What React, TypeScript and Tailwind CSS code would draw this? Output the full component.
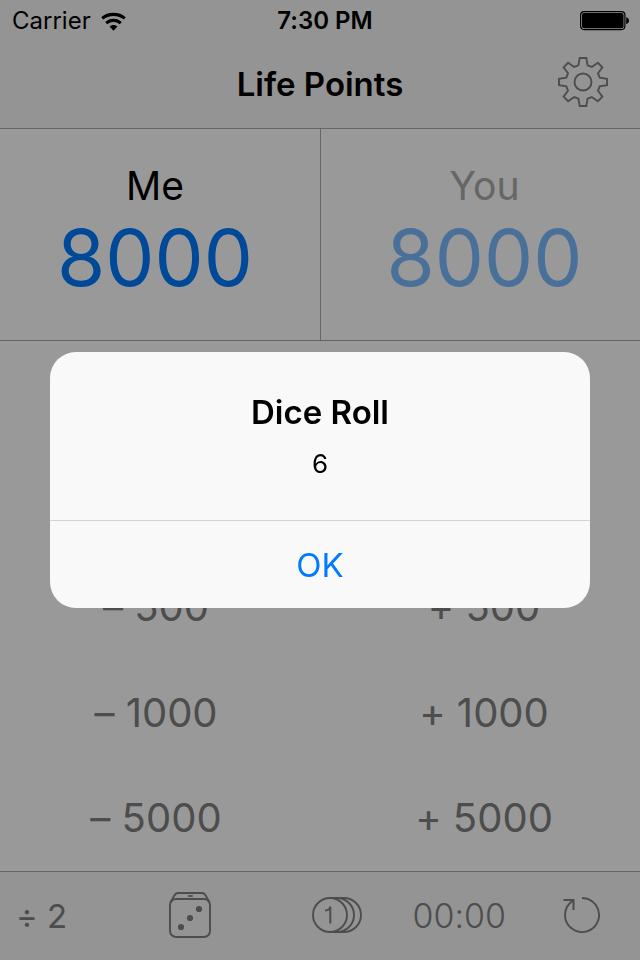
import { useState } from "react";

const steps = [50, 100, 500, 1000, 5000];

function WifiIcon() {
  return (
    <svg width="25" height="19" viewBox="0 0 25 19" fill="none" stroke="black" aria-hidden="true">
      <path d="M1.200 6.400C7.400 1 17.600 1 23.800 6.400" strokeWidth="3.100" />
      <path d="M5.200 11.200C9.400 7.200 15.600 7.200 19.800 11.200" strokeWidth="3" />
      <path d="M12.500 18.800L8.500 14.600C10.800 12.400 14.200 12.400 16.500 14.600Z" fill="black" stroke="none" />
    </svg>
  );
}

function BatteryIcon() {
  return (
    <svg width="50" height="20" viewBox="0 0 50 20" aria-hidden="true">
      <rect x="0.600" y="0.600" width="44.300" height="18" rx="3.500" fill="none" stroke="black" strokeWidth="1.200" />
      <rect x="2" y="2" width="41.500" height="15.200" rx="2" fill="black" />
      <path d="M46.200 6.200C48 6.600 49 7.800 49 9.600S48 12.600 46.200 13Z" fill="black" />
    </svg>
  );
}

function GearIcon() {
  return (
    <svg width="50" height="50" viewBox="0 0 50 50" fill="none" stroke="currentColor" strokeWidth="1.900" aria-hidden="true">
      <circle cx="25" cy="25" r="8.500" />
      <path d="M21.700 1H28.300L29.600 8.300L33.800 10L39.900 5.800L44.400 10.300L40 16.300L41.700 20.600L49 21.800V28.200L41.700 29.400L40 33.700L44.400 39.700L39.900 44.200L33.800 40L29.600 41.700L28.300 49H21.700L20.400 41.700L16.200 40L10.100 44.200L5.600 39.700L10 33.700L8.300 29.400L1 28.200V21.800L8.300 20.600L10 16.300L5.600 10.300L10.100 5.800L16.200 10L20.400 8.300Z" />
    </svg>
  );
}

function DiceIcon() {
  return (
    <svg width="42" height="46" viewBox="0 0 42 46" fill="none" stroke="currentColor" strokeWidth="1.900" aria-hidden="true">
      <rect x="1" y="7" width="40" height="38" rx="6" />
      <path d="M1.400 10.500L5.200 3.800C6.200 1.800 7.400 1 9.400 1H32.600C34.600 1 35.800 1.800 36.800 3.800L40.600 10.500" />
      <ellipse cx="21.500" cy="4" rx="2.800" ry="1" fill="currentColor" stroke="none" />
      <g fill="currentColor" stroke="none">
        <circle cx="12" cy="35" r="3.100" />
        <circle cx="21" cy="26" r="3.100" />
        <circle cx="30" cy="17" r="3.100" />
      </g>
    </svg>
  );
}

function CoinsIcon() {
  return (
    <svg width="50" height="36" viewBox="0 0 50 36" fill="none" stroke="currentColor" strokeWidth="1.900" aria-hidden="true">
      <circle cx="18" cy="18" r="17" />
      <path d="M18 1H25A17 17 0 0 1 25 35H18" />
      <path d="M25 1H32A17 17 0 0 1 32 35H25" />
      <path d="M13 13.500C16 13.500 18 12.500 18.300 9.500V26.500" strokeWidth="2" />
    </svg>
  );
}

function ResetIcon() {
  return (
    <svg width="40" height="36" viewBox="0 0 40 36" fill="none" stroke="currentColor" strokeWidth="1.900" aria-hidden="true">
      <path d="M20 1A17 17 0 1 1 11 3.600" />
      <path d="M1.500 3H11.500V13" strokeWidth="2" />
    </svg>
  );
}

export default function App() {
  const [open, setOpen] = useState(true);

  return (
    <div className="min-h-screen bg-white flex flex-col text-black font-[Inter,'Liberation_Sans',sans-serif] [font-feature-settings:'calt'_0]">
      <header className="bg-[#f7f7f7] border-b border-[#aaaaaa]">
        <div className="h-10 grid grid-cols-3 items-center text-2xl pt-0.5 pl-3 pr-[10px]">
          <div className="flex items-center gap-2.5">
            <span>Carrier</span>
            <WifiIcon />
          </div>
          <span className="pl-2 text-center font-semibold">7:30 PM</span>
          <div className="flex justify-end">
            <BatteryIcon />
          </div>
        </div>
        <div className="h-[88px] grid grid-cols-[1fr_auto_1fr] items-center px-8">
          <h1 className="col-start-2 text-[33px] leading-10 font-semibold">Life Points</h1>
          <button aria-label="Settings" className="justify-self-end pb-1 text-[#808080]">
            <GearIcon />
          </button>
        </div>
      </header>

      <main className="flex-1 flex flex-col">
        <section className="grid grid-cols-2 text-center border-b border-[#aaaaaa]">
          <div className="pt-[33px] pb-[34px] pr-[10px]">
            <h2 className="text-[39px] leading-[48px]">Me</h2>
            <p className="text-[78px] leading-[96px] text-[#007aff]">8000</p>
          </div>
          <div className="pt-[33px] pb-[34px] pl-2 border-l border-[#aaaaaa]">
            <h2 className="text-[39px] leading-[48px] text-[#aaaaaa]">You</h2>
            <p className="text-[78px] leading-[96px] text-[#7bbbff]">8000</p>
          </div>
        </section>

        <section className="flex-1 grid grid-cols-2 gap-x-4 auto-rows-fr pt-[3px] text-[40px] leading-[48px] text-[#808080]">
          {steps.map((step) => (
            <div key={step} className="contents">
              <button>– {step}</button>
              <button>+ {step}</button>
            </div>
          ))}
        </section>
      </main>

      <footer className="h-[89px] bg-[#f7f7f7] border-t border-[#aaaaaa] flex items-center pl-4 pr-[38px] text-[33px] leading-10 text-[#808080]">
        <div className="flex-1 flex items-center justify-between">
          <button>÷ 2</button>
          <button aria-label="Roll dice" className="pb-0.5">
            <DiceIcon />
          </button>
          <button aria-label="Flip coin" className="pb-0.5">
            <CoinsIcon />
          </button>
        </div>
        <button className="ml-[50px] text-[34px] font-light">00:00</button>
        <button aria-label="Reset" className="ml-14 pb-0.5">
          <ResetIcon />
        </button>
      </footer>

      {open && (
        <div className="fixed inset-0 bg-black/40 flex items-center justify-center px-[50px]">
          <div
            role="alertdialog"
            aria-labelledby="dice-title"
            aria-describedby="dice-result"
            className="w-full max-w-[540px] rounded-[26px] bg-[#f9f9f9] text-center overflow-hidden"
          >
            <div className="pt-10 pb-10">
              <h2 id="dice-title" className="text-[33px] leading-10 font-semibold">
                Dice Roll
              </h2>
              <p id="dice-result" className="mt-4 text-[26px] leading-8">
                6
              </p>
            </div>
            <button
              onClick={() => setOpen(false)}
              className="w-full h-[88px] border-t border-[#d4d4d6] text-[33px] leading-10 text-[#007aff]"
            >
              OK
            </button>
          </div>
        </div>
      )}
    </div>
  );
}
